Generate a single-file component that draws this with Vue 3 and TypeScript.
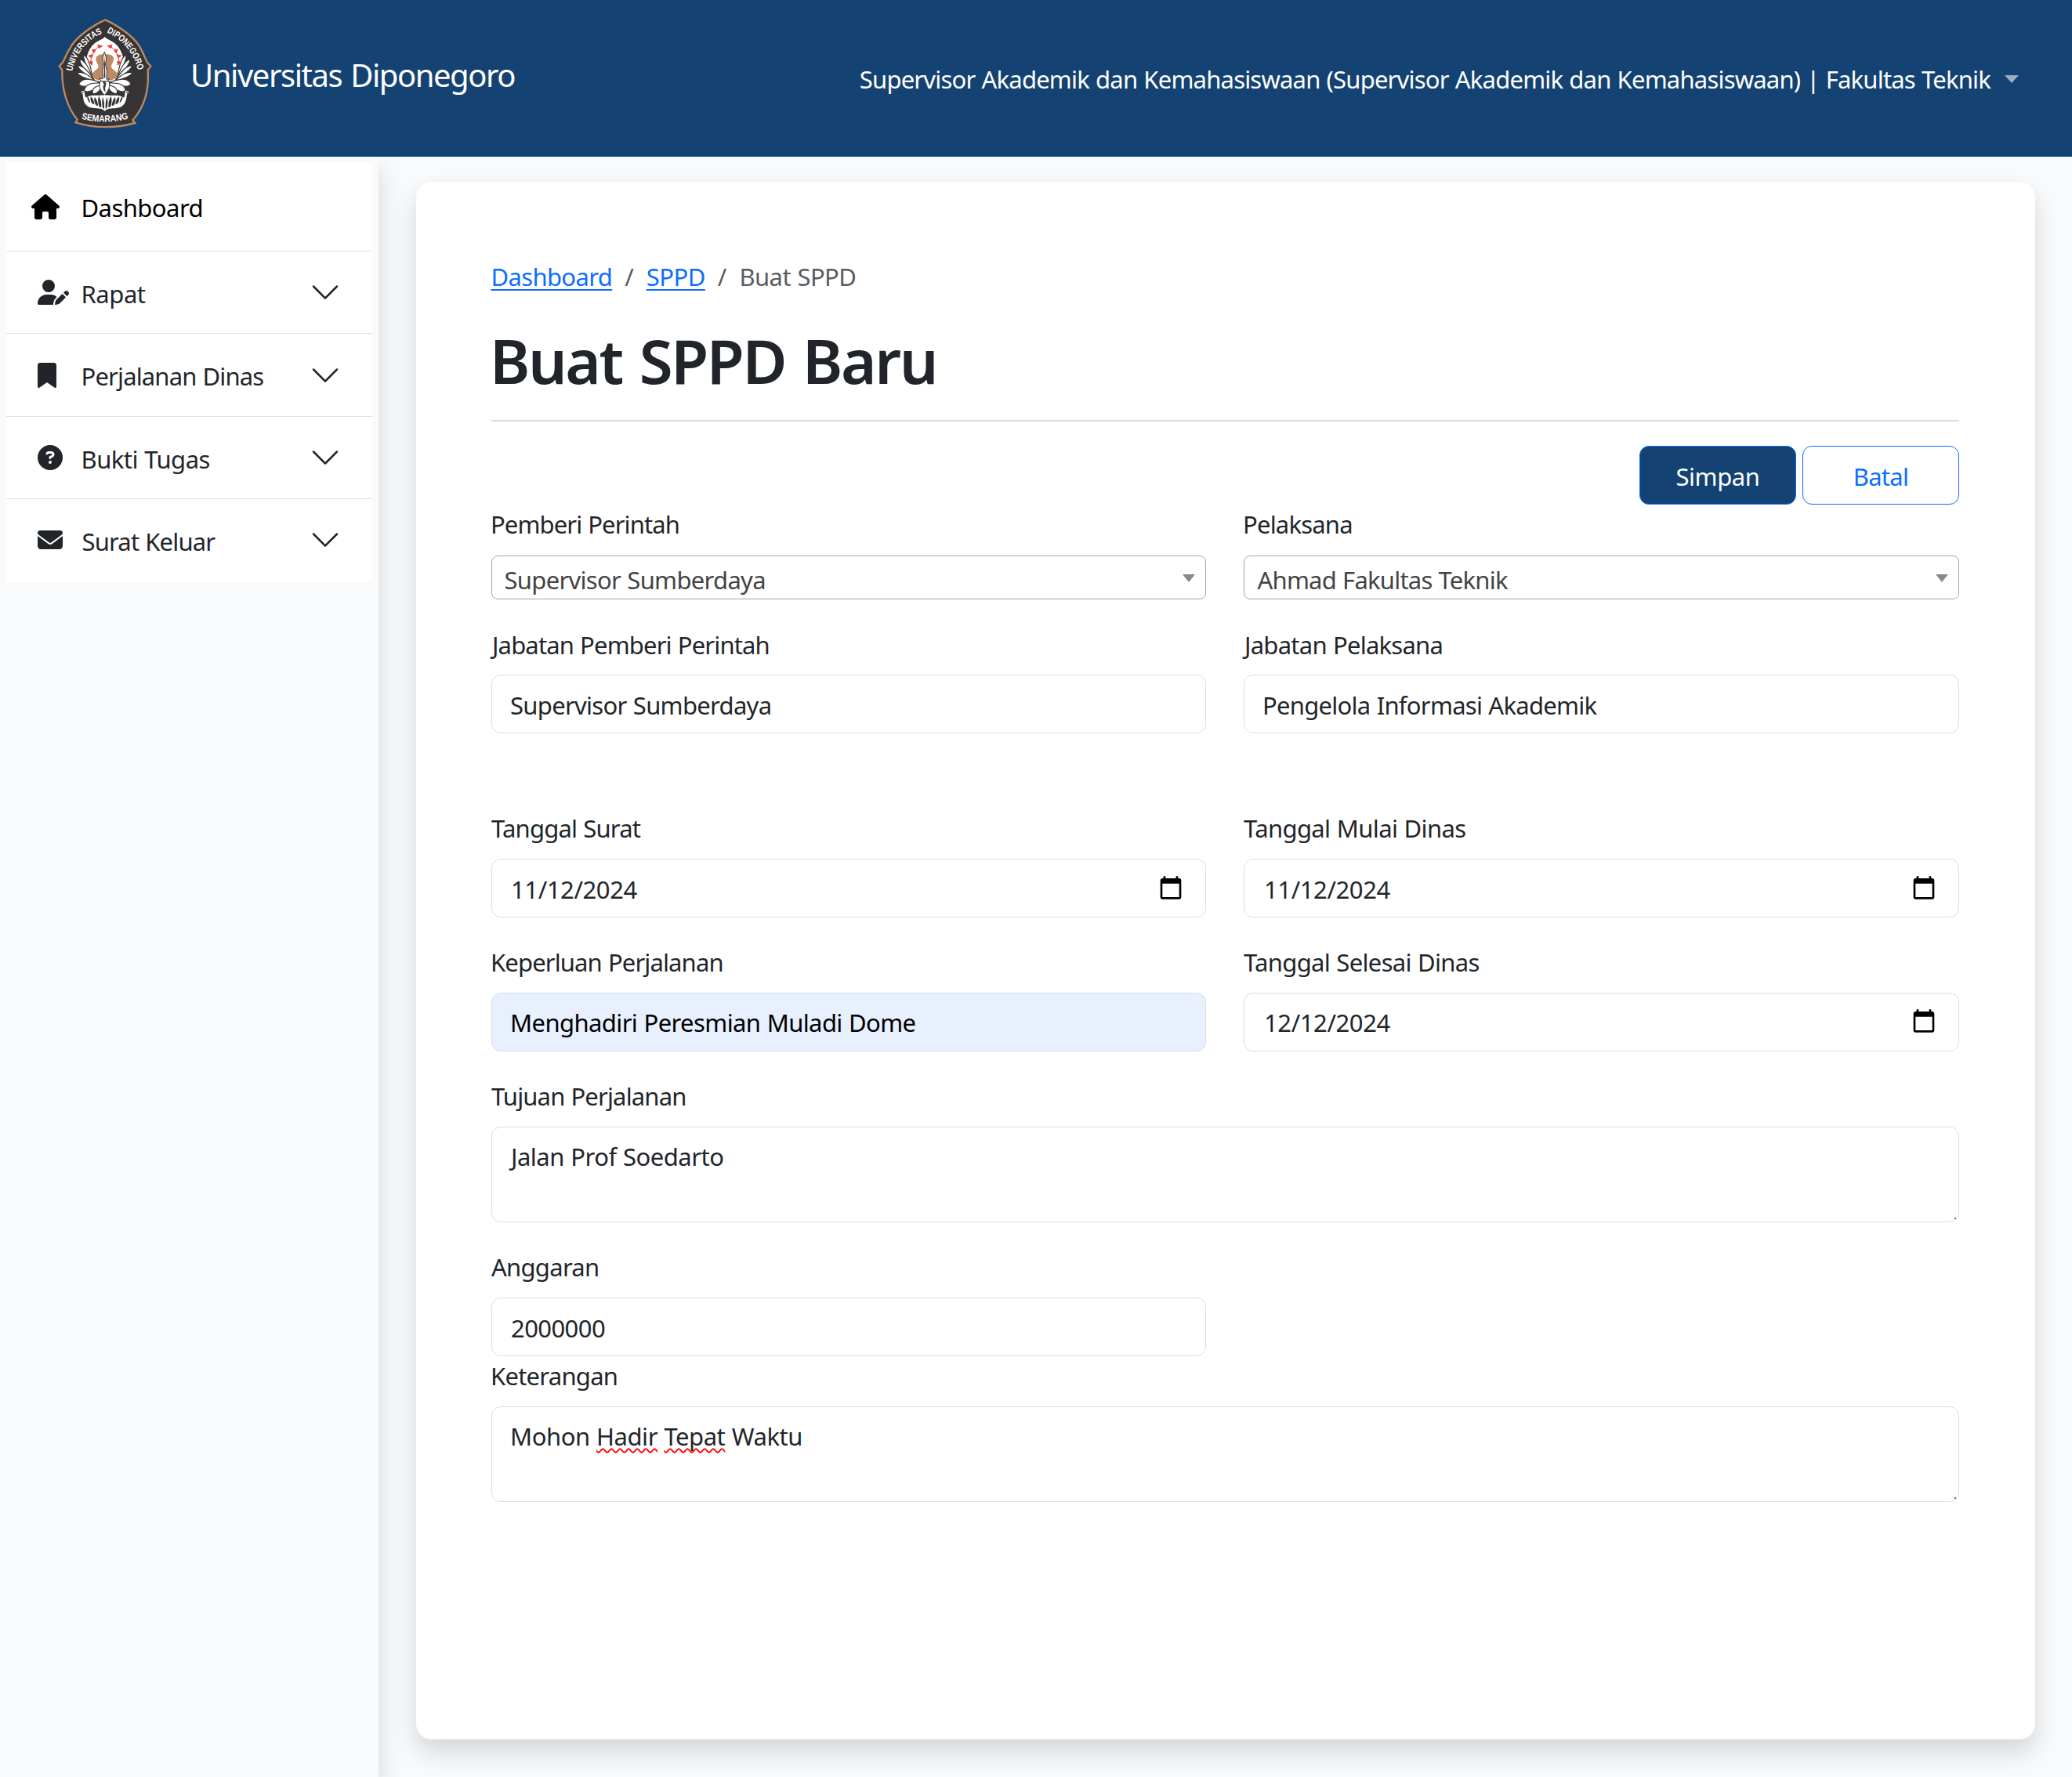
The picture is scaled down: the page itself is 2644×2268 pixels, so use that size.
<script setup lang="ts">
interface Txt { text: string; ls: number; dx?: number }
interface MenuItem extends Txt { icon: string; w: number }
interface Field { label: Txt; value: Txt; kind: 'text' | 'date' | 'select' | 'autofill' }

const t = (text: string, ls: number, dx = 0): Txt => ({ text, ls, dx })
const fit = (x: Txt) => ({ letterSpacing: `${x.ls}px`, marginLeft: `${x.dx ?? 0}px` })

const icons: Record<string, string> = {
  house: 'M575.8 255.5c0 18-15 32.1-32 32.1h-32l.7 160.2c0 2.7-.2 5.4-.5 8.1V472c0 22.1-17.9 40-40 40H456c-1.1 0-2.2 0-3.3-.1c-1.4 .1-2.8 .1-4.2 .1H416 392c-22.1 0-40-17.9-40-40V448 384c0-17.7-14.3-32-32-32H256c-17.7 0-32 14.3-32 32v64 24c0 22.1-17.9 40-40 40H160 128.1c-1.5 0-3-.1-4.5-.2c-1.2 .1-2.4 .2-3.6 .2H104c-22.1 0-40-17.9-40-40V360c0-.9 0-1.9 .1-2.8V287.6H32c-18 0-32-14-32-32.1c0-9 3-17 10-24L266.4 8c7-7 15-8 22-8s15 2 21 7L564.8 231.5c8 7 12 15 11 24z',
  userPen: 'M224 256A128 128 0 1 0 224 0a128 128 0 1 0 0 256zm-45.7 48C79.8 304 0 383.8 0 482.3C0 498.7 13.3 512 29.7 512H322.8c-3.1-8.8-3.7-18.4-1.4-27.8l15-60.1c2.8-11.3 8.6-21.5 16.8-29.7l40.3-40.3c-32.1-31-75.7-50.1-123.9-50.1H178.3zm435.5-68.3c-15.6-15.6-40.9-15.6-56.6 0l-29.4 29.4 71 71 29.4-29.4c15.6-15.6 15.6-40.9 0-56.6l-14.4-14.4zM375.9 417c-4.1 4.1-7 9.2-8.4 14.9l-15 60.1c-1.4 5.5 .2 11.2 4.2 15.2s9.7 5.6 15.2 4.2l60.1-15c5.6-1.4 10.8-4.3 14.9-8.4L576.1 358.7l-71-71L375.9 417z',
  bookmark: 'M0 48V487.7C0 501.1 10.9 512 24.3 512c5 0 9.9-1.5 14-4.4L192 400 345.7 507.6c4.1 2.9 9 4.4 14 4.4c13.4 0 24.3-10.9 24.3-24.3V48c0-26.5-21.5-48-48-48H48C21.5 0 0 21.5 0 48z',
  question: 'M256 512A256 256 0 1 0 256 0a256 256 0 1 0 0 512zM169.8 165.3c7.9-22.3 29.1-37.3 52.8-37.3h58.3c34.9 0 63.1 28.3 63.1 63.1c0 22.6-12.1 43.5-31.7 54.8L280 264.4c-.2 13-10.9 23.6-24 23.6c-13.3 0-24-10.7-24-24V250.5c0-8.6 4.6-16.5 12.1-20.8l44.3-25.4c4.7-2.7 7.6-7.7 7.6-13.1c0-8.4-6.8-15.1-15.1-15.1H222.6c-3.4 0-6.4 2.1-7.5 5.3l-.4 1.2c-4.4 12.5-18.2 19-30.6 14.6s-19-18.2-14.6-30.6l.4-1.2zM224 352a32 32 0 1 1 64 0 32 32 0 1 1-64 0z',
  envelope: 'M48 64C21.5 64 0 85.5 0 112c0 15.1 7.1 29.3 19.2 38.4L236.8 313.6c11.4 8.5 27 8.5 38.4 0L492.8 150.4c12.1-9.1 19.2-23.3 19.2-38.4c0-26.5-21.5-48-48-48H48zM0 176V384c0 35.3 28.7 64 64 64H448c35.3 0 64-28.7 64-64V176L294.4 339.2c-22.8 17.1-54 17.1-76.8 0L0 176z',
}

const home: MenuItem = { icon: 'house', w: 576, ...t('Dashboard', -0.55, 1) }
const menu: MenuItem[] = [
  { icon: 'userPen', w: 640, ...t('Rapat', -0.45, 1) },
  { icon: 'bookmark', w: 384, ...t('Perjalanan Dinas', -0.85, 1) },
  { icon: 'question', w: 512, ...t('Bukti Tugas', -0.52, 1) },
  { icon: 'envelope', w: 512, ...t('Surat Keluar', -0.84, 2) },
]

const brand = t('Universitas Diponegoro', -1.45)
const user = t('Supervisor Akademik dan Kemahasiswaan (Supervisor Akademik dan Kemahasiswaan) | Fakultas Teknik', -0.8)

const rows: { gap: string; fields: Field[] }[] = [
  {
    gap: 'row-first',
    fields: [
      { kind: 'select', label: t('Pemberi Perintah', -0.9, -1), value: t('Supervisor Sumberdaya', -0.7, 0.5) },
      { kind: 'select', label: t('Pelaksana', -0.8, -1), value: t('Ahmad Fakultas Teknik', -0.78, 1.5) },
    ],
  },
  {
    gap: 'row-select',
    fields: [
      { kind: 'text', label: t('Jabatan Pemberi Perintah', -0.85, 1), value: t('Supervisor Sumberdaya', -0.7, 1) },
      { kind: 'text', label: t('Jabatan Pelaksana', -0.75, 1), value: t('Pengelola Informasi Akademik', -0.73, 1) },
    ],
  },
  {
    gap: 'row-far',
    fields: [
      { kind: 'date', label: t('Tanggal Surat', -0.8), value: t('11/12/2024', -0.41, 2) },
      { kind: 'date', label: t('Tanggal Mulai Dinas', -0.62), value: t('11/12/2024', -0.41, 3) },
    ],
  },
  {
    gap: 'row-near row-raised',
    fields: [
      { kind: 'autofill', label: t('Keperluan Perjalanan', -0.87, -1), value: t('Menghadiri Peresmian Muladi Dome', -0.6, 1) },
      { kind: 'date', label: t('Tanggal Selesai Dinas', -0.67), value: t('12/12/2024', -0.41, 3) },
    ],
  },
]

/* Feathers of the crest: base point, tip and half-width of each leaf */
const feathers = [
  [204, 266, 172, 180, 9],
  [206, 270, 157, 197, 10],
  [210, 274, 149, 221, 10],
  [214, 279, 148, 248, 10],
  [232, 284, 152, 290, 17],
  [242, 288, 172, 315, 17],
  [246, 294, 204, 326, 14],
].map(([bx, by, tx, ty, w]) => {
  const dx = tx - bx, dy = ty - by, l = Math.hypot(dx, dy)
  const nx = (-dy / l) * w, ny = (dx / l) * w
  const p = (k: number, s: number) => `${(bx + dx * k + nx * s).toFixed(1)} ${(by + dy * k + ny * s).toFixed(1)}`
  return `M${bx} ${by}C${p(0.35, 0.6)} ${p(0.75, 1.5)} ${tx} ${ty}C${p(0.95, -1)} ${p(0.5, -0.9)} ${bx} ${by}Z`
})
const flames = [
  'M184 336q8 10 12 28l-6-4q-8-12-6-24z',
  'M197 340q12 8 14 30l-8-3q-9-14-6-27z',
  'M212 342q12 10 13 34l-8-3q-9-16-5-31z',
  'M228 338q11 14 10 44l-8-4q-8-20-2-40z',
  'M243 342q7 12 6 44l-5-2q-6-20-1-42z',
]
const rays = [
  '202,160 217,160 209,173', '224,142 241,146 229,155', '189,183 206,179 200,192', '188,209 203,204 203,219',
]
</script>

<template>
  <div class="page">
    <header class="topbar">
      <svg class="logo" viewBox="0 0 510 510">
        <path d="M253 46C295 64 358 106 383 146C400 176 409 200 413 208L427 223L416 238C421 310 403 380 358 430L367 441C290 462 215 462 139 439L146 428C106 380 86 310 88 238L77 223L91 208C95 200 104 176 123 146C148 106 211 64 253 46Z" fill="#373435" stroke="#bc8a63" stroke-width="7" />
        <path d="M251 111C262 124 284 126 301 147C325 178 327 215 320 240C315 262 303 274 290 284H213C200 274 188 262 183 240C176 215 178 178 201 147C218 126 240 124 251 111Z" fill="#fff" />
        <g v-for="s in [1, -1]" :key="s" :transform="s === 1 ? undefined : 'translate(503 0) scale(-1 1)'">
          <path v-for="f in feathers" :key="f" :d="f" fill="#fff" stroke="#373435" stroke-width="3.5" />
          <polygon v-for="r in rays" :key="r" :points="r" fill="#e0483f" stroke="#e0483f" stroke-width="3" />
          <path d="M241 144C215 152 197 178 196 216" fill="none" stroke="#e0483f" stroke-width="3" />
        </g>
        <path d="M251 178C275 175 287 184 285 199C283 212 276 216 276 224C276 238 302 240 299 259C296 275 276 279 251 279C226 279 206 275 203 259C201 240 227 238 227 224C227 216 219 212 217 199C216 184 228 175 251 178Z" fill="#bc8a63" />
        <path d="M250 168L257 192L254 216L259 240L258 274L268 272L262 281H238L230 270L243 272L242 240L247 216L243 192Z" fill="#fff" stroke="#373435" stroke-width="3" />
        <path d="M250 180L252 215L253 268H247L249 215Z" fill="#373435" />
        <path d="M234 281H266C274 300 266 318 250 334C234 318 226 300 234 281Z" fill="#fff" stroke="#373435" stroke-width="3" />
        <path d="M243 284q14-4 13 6t-3 14 1 18q-8-4-9-16t6-14q-6 0-8-8z" fill="#373435" />
        <path d="M169 317C160 316 158 328 167 329C168 352 172 374 196 382C220 388 238 382 251 395C264 382 282 388 306 382C330 374 334 352 336 329C345 328 343 316 334 317C326 318 330 330 327 338C322 350 310 356 290 356H213C193 356 181 350 176 338C173 330 177 318 169 317Z" fill="#fff" />
        <path d="M178 345C195 330 215 338 251 334C287 338 307 330 325 345L312 362H191Z" fill="#fff" />
        <g v-for="s in [1, -1]" :key="'f' + s" :transform="s === 1 ? undefined : 'translate(503 0) scale(-1 1)'">
          <path v-for="f in flames" :key="f" :d="f" fill="#373435" />
          <circle cx="167" cy="323" r="3" fill="#373435" />
        </g>
        <path id="arc-left" d="M126 244Q150 135 250 94" fill="none" />
        <path id="arc-right" d="M256 93Q355 137 380 246" fill="none" />
        <path id="arc-bottom" d="M161 425Q251 448 344 424" fill="none" />
        <g class="logo-text">
          <text><textPath href="#arc-left" textLength="194" lengthAdjust="spacingAndGlyphs">UNIVERSITAS</textPath></text>
          <text><textPath href="#arc-right" startOffset="3" textLength="195" lengthAdjust="spacingAndGlyphs">DIPONEGORO</textPath></text>
          <text><textPath href="#arc-bottom" textLength="183" lengthAdjust="spacingAndGlyphs">SEMARANG</textPath></text>
        </g>
      </svg>
      <div class="brand" :style="{ letterSpacing: brand.ls + 'px' }">{{ brand.text }}</div>
      <div class="user">
        <span :style="{ letterSpacing: user.ls + 'px' }">{{ user.text }}</span>
        <i class="caret"></i>
      </div>
    </header>

    <div class="body">
      <aside class="sidebar">
        <nav class="menu">
          <a class="item home">
            <span class="ico"><svg :viewBox="`0 0 ${home.w} 512`" height="32" :width="home.w / 16"><path :d="icons[home.icon]" fill="currentColor" /></svg></span>
            <span class="item-text" :style="fit(home)">{{ home.text }}</span>
          </a>
          <a v-for="m in menu" :key="m.text" class="item">
            <span class="ico"><svg :viewBox="`0 0 ${m.w} 512`" height="32" :width="m.w / 16"><path :d="icons[m.icon]" fill="currentColor" /></svg></span>
            <span class="item-text" :style="fit(m)">{{ m.text }}</span>
            <svg class="chevron" viewBox="0 0 16 16"><path fill="currentColor" d="M1.646 4.646a.5.5 0 0 1 .708 0L8 10.293l5.646-5.647a.5.5 0 0 1 .708.708l-6 6a.5.5 0 0 1-.708 0l-6-6a.5.5 0 0 1 0-.708z" /></svg>
          </a>
        </nav>
      </aside>

      <main class="main">
        <section class="card">
          <div class="crumbs">
            <a class="crumb-home">Dashboard</a><span>/</span><a class="crumb-sppd">SPPD</a><span>/</span><span class="crumb-current">Buat SPPD</span>
          </div>
          <h1>Buat SPPD Baru</h1>
          <hr />
          <div class="actions">
            <button class="btn primary">Simpan</button>
            <button class="btn outline">Batal</button>
          </div>

          <div v-for="(row, i) in rows" :key="i" class="row" :class="row.gap">
            <div v-for="f in row.fields" :key="f.label.text" class="field" :class="f.kind">
              <div class="label"><span :style="fit(f.label)">{{ f.label.text }}</span></div>
              <div class="control">
                <span :style="fit(f.value)">{{ f.value.text }}</span>
                <i v-if="f.kind === 'select'" class="arrow"></i>
                <svg v-if="f.kind === 'date'" class="cal" viewBox="0 0 24 24"><path d="M20 3h-1V1h-2v2H7V1H5v2H4c-1.1 0-2 .9-2 2v16c0 1.1.9 2 2 2h16c1.1 0 2-.9 2-2V5c0-1.1-.9-2-2-2zm0 18H4V8h16v13z" /></svg>
              </div>
            </div>
          </div>

          <div class="row wide row-near">
            <div class="field area">
              <div class="label"><span :style="fit(t('', -0.85))">Tujuan Perjalanan</span></div>
              <div class="control"><span :style="fit(t('', -0.5, 2))">Jalan Prof Soedarto</span><i class="grip"></i></div>
            </div>
          </div>
          <div class="row row-near">
            <div class="field">
              <div class="label"><span :style="fit(t('', -0.72))">Anggaran</span></div>
              <div class="control"><span :style="fit(t('', -0.58, 2))">2000000</span></div>
            </div>
          </div>
          <div class="row wide row-tight">
            <div class="field area">
              <div class="label"><span :style="fit(t('', -0.75, -1))">Keterangan</span></div>
              <div class="control"><span :style="fit(t('', -0.46, 1))">Mohon <u>Hadir</u> <u>Tepat</u> Waktu</span><i class="grip"></i></div>
            </div>
          </div>
        </section>
      </main>
    </div>
  </div>
</template>

<style>
body { margin: 0; background: #f8fafc; }
</style>

<style scoped>
* { box-sizing: border-box; }
.page { width: 2644px; height: 2268px; overflow: hidden; display: flex; flex-direction: column; background: #f8fafc; color: #212529; font: 31px/48px "Noto Sans", "Open Sans", sans-serif; word-spacing: 0.8px; }
.topbar { position: relative; z-index: 2; flex: none; height: 200px; background: #144272; color: #fff; display: flex; align-items: flex-start; }
.logo { width: 170px; height: 170px; margin: 10px 0 0 50px; }
.logo-text { font: bold 35px "Liberation Sans", Arial, sans-serif; fill: #fff; }
.brand { margin: 66px 0 0 23px; font-size: 40px; line-height: 60px; white-space: nowrap; word-spacing: 2px; }
.user { margin: 77px 68px 0 auto; display: flex; white-space: nowrap; }
.caret { width: 18px; height: 10px; margin: 19px 0 0 18px; background: #9baec2; clip-path: polygon(0 0, 100% 0, 50% 100%); }
.body { flex: 1; display: flex; }
.sidebar { flex: none; width: 483px; padding: 8px; background: #f8fafc; box-shadow: 0 16px 32px rgba(0, 0, 0, 0.15); }
.menu { background: #fff; display: flex; flex-direction: column; }
.item { display: flex; align-items: center; height: 105px; padding: 0 40px; border-bottom: 1px solid #dee2e6; }
.item:nth-child(3) { height: 106px; }
.item:last-child { border-bottom-color: #fff; }
.item.home { height: 113px; padding-left: 32px; color: #000; }
.ico { flex: none; width: 54.5px; display: flex; }
.home .ico { width: 62.5px; }
.item-text { flex: 1; padding-top: 3px; white-space: nowrap; }
.home .item-text { padding-top: 2px; }
.chevron { width: 40px; height: 40px; }
.main { flex: 1; padding: 32px 47px 48px 48px; display: flex; }
.card { flex: 1; background: #fff; border-radius: 20px; box-shadow: 0 16px 32px rgba(0, 0, 0, 0.15); padding: 97px 97px 0 96px; }
.crumbs { display: flex; gap: 16px; margin-left: -0.5px; color: #595c5f; }
.crumbs a { color: #0d6efd; text-decoration: underline; text-decoration-thickness: 2px; text-underline-offset: 4px; }
.crumb-home { letter-spacing: -0.65px; }
.crumb-sppd { letter-spacing: -0.5px; }
.crumb-current { letter-spacing: -0.55px; }
h1 { margin: 35px 0 0 -2px; font-size: 78px; line-height: 96px; font-weight: 600; letter-spacing: -2.4px; word-spacing: 4px; }
hr { margin: 28px 0 0; border: 0; height: 2px; background: #d8d9da; }
.actions { display: flex; justify-content: flex-end; gap: 8px; margin-top: 31px; }
.btn { width: 200px; height: 75px; padding: 3px 0 0; border: 1px solid #0d6efd; border-radius: 12px; font: inherit; background: #fff; color: #0d6efd; letter-spacing: -0.71px; }
.btn.primary { background: #144272; color: #fff; letter-spacing: -0.41px; }
.row { display: grid; grid-template-columns: 912px 913px; gap: 48px; }
.row.wide { grid-template-columns: 1fr; }
.row-first, .row-tight { margin-top: 1px; }
.row-select { margin-top: 34px; }
.row-far { margin-top: 97px; }
.row-near { margin-top: 33px; }
.label { height: 48px; white-space: nowrap; }
.label span, .control span { display: inline-block; }
.control { position: relative; margin-top: 15px; height: 75px; padding: 3px 24px 0 22px; display: flex; align-items: center; border: 1px solid #d9dde2; border-radius: 12px; background: #fff; white-space: nowrap; }
.row-select .control { margin-top: 14px; }
.row-raised .control { padding-top: 1px; }
.select .control { margin-top: 16px; height: 56px; padding: 6px 13px 0 15px; border-color: #a4a4a4; border-radius: 8px; color: #444; }
.arrow { margin: 0 0 4px auto; width: 16px; height: 10px; background: #888; clip-path: polygon(0 0, 100% 0, 50% 100%); }
.cal { width: 32px; height: 32px; margin: 0 4px 4px auto; fill: #000; }
.autofill .control { background: #e8f0fe; color: #000; }
.area .control { height: 122px; align-items: flex-start; padding-top: 13px; }
.grip { position: absolute; right: 3px; bottom: 3px; width: 2px; height: 2px; background: #666; }
u { text-decoration: underline wavy #f00; text-decoration-thickness: 2px; text-underline-offset: 3px; text-decoration-skip-ink: none; }
</style>
